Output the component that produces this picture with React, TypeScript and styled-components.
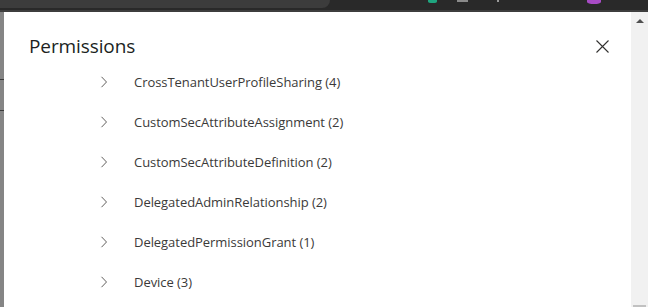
import React from 'react';
import styled, { createGlobalStyle } from 'styled-components';

const GlobalStyle = createGlobalStyle`
  html, body {
    margin: 0;
    padding: 0;
    width: 648px;
    height: 307px;
    overflow: hidden;
    background: #ffffff;
  }
  * {
    box-sizing: border-box;
  }
`;

const Page = styled.div`
  width: 648px;
  height: 307px;
  display: flex;
  flex-direction: column;
  font-family: 'Open Sans', 'Noto Sans', sans-serif;
`;

const BrowserBar = styled.div`
  height: 12px;
  flex-shrink: 0;
  display: flex;
  align-items: flex-start;
  background-color: #292929;
  border-bottom: 2px solid #3e3e3e;
  position: relative;
`;

const AddressBox = styled.div`
  width: 330px;
  height: 8px;
  background-color: #3c3c3c;
  border-bottom-right-radius: 8px;
`;

const BarIcon = styled.div<{ $left: number; $w: number; $h: number; $color: string; $round?: boolean }>`
  position: absolute;
  top: 0;
  left: ${p => p.$left}px;
  width: ${p => p.$w}px;
  height: ${p => p.$h}px;
  background-color: ${p => p.$color};
  border-radius: ${p => (p.$round ? '0 0 50% 50%' : '0')};
`;

const Body = styled.div`
  flex: 1;
  display: flex;
  min-height: 0;
`;

const Backdrop = styled.div`
  width: 4px;
  flex-shrink: 0;
  background-color: #858585;
  display: flex;
  flex-direction: column;
`;

const BackdropLine = styled.div<{ $gap: number }>`
  margin-top: ${p => p.$gap}px;
  height: 1px;
  background-color: #3a3a3a;
`;

const Panel = styled.div`
  flex: 1;
  background-color: #ffffff;
  padding: 0 0 0 25px;
  overflow: hidden;
`;

const Header = styled.div`
  display: flex;
  align-items: center;
  justify-content: space-between;
  height: 40px;
  margin-top: 14px;
  padding-right: 21px;
`;

const Title = styled.h2`
  margin: 0;
  font-size: 19px;
  font-weight: 400;
  color: #201f1e;
  letter-spacing: -0.1px;
`;

const CloseButton = styled.button`
  width: 16px;
  height: 16px;
  padding: 0;
  border: none;
  background: none;
  display: flex;
  align-items: center;
  justify-content: center;
  color: #323130;
`;

const List = styled.ul`
  list-style: none;
  margin: 0;
  padding: 0 0 0 70px;
  margin-top: -4px;
`;

const Row = styled.li`
  height: 40px;
  display: flex;
  align-items: center;
`;

const Chevron = styled.span`
  width: 35px;
  padding-left: 1px;
  flex-shrink: 0;
  display: flex;
  align-items: center;
  color: #605e5c;
`;

const Label = styled.span`
  font-size: 13px;
  color: #3b3a39;
  letter-spacing: -0.05px;
`;

const Scrollbar = styled.div`
  width: 17px;
  flex-shrink: 0;
  background-color: #f1f1f1;
  display: flex;
  flex-direction: column;
  align-items: center;
  justify-content: space-between;
`;

const ArrowUp = styled.div`
  margin-top: 7px;
  width: 0;
  height: 0;
  border-left: 4px solid transparent;
  border-right: 4px solid transparent;
  border-bottom: 4px solid #505050;
`;

const Thumb = styled.div`
  width: 13px;
  height: 2px;
  background-color: #c1c1c1;
`;

const permissions = [
  'CrossTenantUserProfileSharing (4)',
  'CustomSecAttributeAssignment (2)',
  'CustomSecAttributeDefinition (2)',
  'DelegatedAdminRelationship (2)',
  'DelegatedPermissionGrant (1)',
  'Device (3)',
];

function ChevronIcon() {
  return (
    <svg width="8" height="12" viewBox="0 0 8 12" fill="none">
      <path d="M1.5 0.8 L6.5 6 L1.5 11.2" stroke="currentColor" strokeWidth="1" />
    </svg>
  );
}

function CloseIcon() {
  return (
    <svg width="13" height="13" viewBox="0 0 13 13" fill="none">
      <path d="M0.5 0.5 L12.5 12.5 M12.5 0.5 L0.5 12.5" stroke="currentColor" strokeWidth="1.1" />
    </svg>
  );
}

export default function App() {
  return (
    <Page>
      <GlobalStyle />
      <BrowserBar>
        <AddressBox />
        <BarIcon $left={428} $w={9} $h={3} $color="#1fa57f" $round />
        <BarIcon $left={457} $w={11} $h={2} $color="#8a8a8a" />
        <BarIcon $left={497} $w={2} $h={2} $color="#9a9a9a" />
        <BarIcon $left={587} $w={14} $h={4} $color="#a74bc4" $round />
      </BrowserBar>
      <Body>
        <Backdrop>
          <BackdropLine $gap={67} />
          <BackdropLine $gap={30} />
        </Backdrop>
        <Panel>
          <Header>
            <Title>Permissions</Title>
            <CloseButton aria-label="Close">
              <CloseIcon />
            </CloseButton>
          </Header>
          <List>
            {permissions.map(name => (
              <Row key={name}>
                <Chevron>
                  <ChevronIcon />
                </Chevron>
                <Label>{name}</Label>
              </Row>
            ))}
          </List>
        </Panel>
        <Scrollbar>
          <ArrowUp />
          <Thumb />
        </Scrollbar>
      </Body>
    </Page>
  );
}
